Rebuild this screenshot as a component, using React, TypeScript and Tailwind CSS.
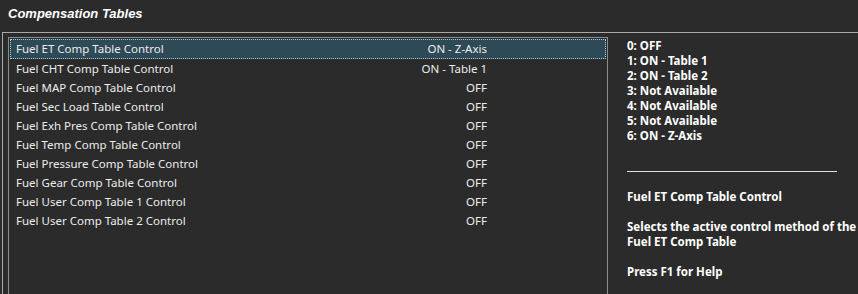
import React from "react";

const rows: [string, string][] = [
  ["Fuel ET Comp Table Control", "ON - Z-Axis"],
  ["Fuel CHT Comp Table Control", "ON - Table 1"],
  ["Fuel MAP Comp Table Control", "OFF"],
  ["Fuel Sec Load Table Control", "OFF"],
  ["Fuel Exh Pres Comp Table Control", "OFF"],
  ["Fuel Temp Comp Table Control", "OFF"],
  ["Fuel Pressure Comp Table Control", "OFF"],
  ["Fuel Gear Comp Table Control", "OFF"],
  ["Fuel User Comp Table 1 Control", "OFF"],
  ["Fuel User Comp Table 2 Control", "OFF"],
];

const options = [
  "0: OFF",
  "1: ON - Table 1",
  "2: ON - Table 2",
  "3: Not Available",
  "4: Not Available",
  "5: Not Available",
  "6: ON - Z-Axis",
];

export default function App() {
  return (
    <div
      className="w-[858px] h-[294px] bg-[#2b2b2b] overflow-hidden text-[#ececec]"
      style={{ fontFamily: '"Noto Sans", "Open Sans", sans-serif' }}
    >
      <div
        className="h-[32px] pl-[8px] pt-[6px] text-[13px] font-bold italic text-white leading-[16px]"
        style={{ fontFamily: '"Liberation Sans", Arial, sans-serif' }}
      >
        Compensation Tables
      </div>
      <div className="ml-[2px] h-[262px] border-l border-t border-[#a8a8a8] flex pl-[5px] pt-[4px]">
        <div className="w-[600px] h-[300px] border border-[#8c8c8c] pt-[1px] px-[1px] shrink-0">
          {rows.map(([name, val], i) => (
            <div
              key={name}
              className={
                i === 0
                  ? "h-[20px] flex items-center border border-dotted border-[#9fd0e8] bg-[#2e4a56]"
                  : "h-[19px] flex items-center border border-transparent"
              }
            >
              <div className="w-[469px] pl-[5px] text-[11.5px] whitespace-nowrap">{name}</div>
              <div className="w-[7px]" />
              <div className="w-[0px] flex justify-end text-[11.5px] whitespace-nowrap">{val}</div>
            </div>
          ))}
        </div>
        <div className="pl-[19px] pt-[1px] text-[11.5px] font-bold text-white leading-[15px] whitespace-nowrap">
          {options.map((o) => (
            <div key={o}>{o}</div>
          ))}
          <div className="w-[210px] h-[1px] bg-[#e0e0e0] mt-[28px] mb-[17px]" />
          <div>Fuel ET Comp Table Control</div>
          <div className="mt-[15px]">Selects the active control method of the</div>
          <div>Fuel ET Comp Table</div>
          <div className="mt-[15px]">Press F1 for Help</div>
        </div>
      </div>
    </div>
  );
}
